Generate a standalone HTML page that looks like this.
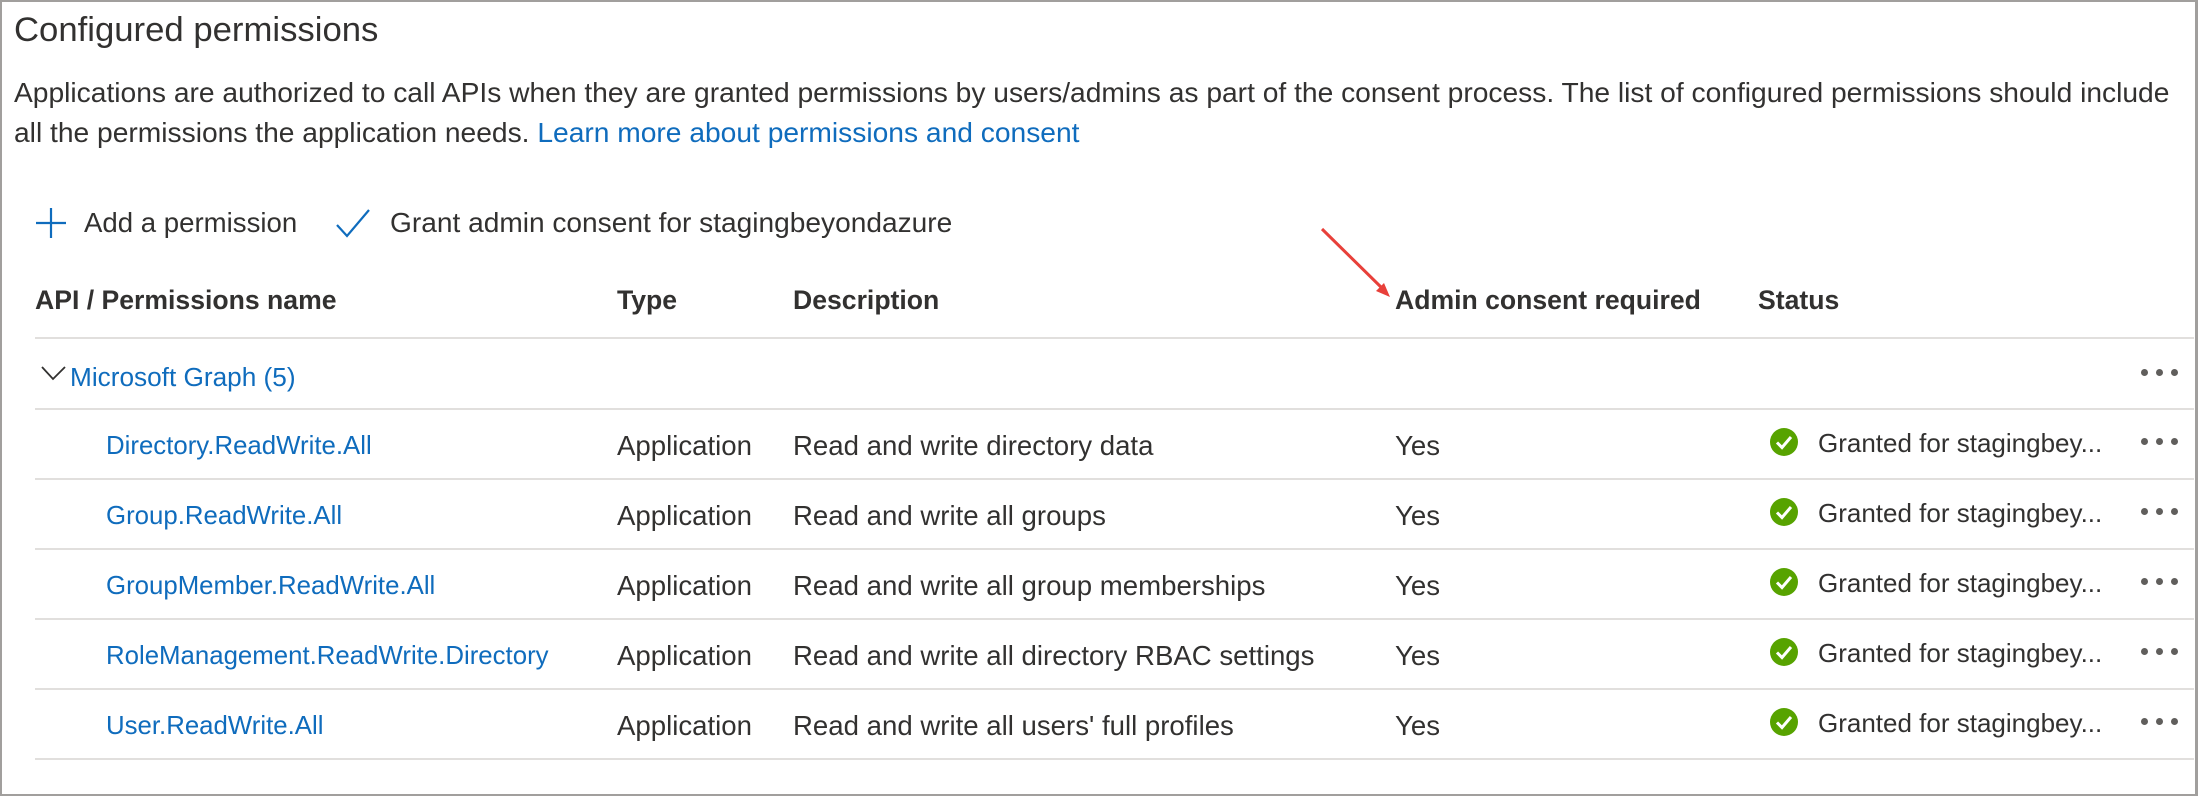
<!DOCTYPE html>
<html><head><style>
body{margin:0;width:2198px;height:796px;overflow:hidden;background:#fff;font-family:"Liberation Sans",sans-serif;color:#323130;position:relative}
.frame{position:absolute;left:0;top:0;border:2px solid #a19f9d;border-right-width:3px;box-sizing:border-box;width:2198px;height:796px}
.a{position:absolute;white-space:nowrap}
.t{font-size:27.6px;line-height:30px}
.b{font-weight:bold;font-size:26.6px}
.l{color:#0f6cbd}
.hr{position:absolute;left:35px;right:4px;height:2px;background:#e1dfdd}
.dots{position:absolute;left:2141px;width:44px;height:8px}
.dots i{position:absolute;top:0;width:7px;height:7px;border-radius:50%;background:#605e5c}
</style></head><body>
<div class="frame"></div>
<div class="a" style="left:14px;top:10px;font-size:34.7px;line-height:40px">Configured permissions</div>
<div class="a t" style="left:14px;top:77px;font-size:28.2px">Applications are authorized to call APIs when they are granted permissions by users/admins as part of the consent process. The list of configured permissions should include</div>
<div class="a t" style="left:14px;top:117px;font-size:28.2px">all the permissions the application needs. <span class="l">Learn more about permissions and consent</span></div>

<svg class="a" style="left:34px;top:206px" width="34" height="34" viewBox="0 0 34 34"><path d="M17 2V32M2 17H32" stroke="#0f6cbd" stroke-width="2.2" fill="none"/></svg>
<div class="a t" style="left:84px;top:208px">Add a permission</div>
<svg class="a" style="left:335px;top:208px" width="36" height="30" viewBox="0 0 36 30"><path d="M2 17L12 28L34 2" stroke="#0f6cbd" stroke-width="2.2" fill="none"/></svg>
<div class="a t" style="left:390px;top:208px;font-size:28.1px">Grant admin consent for stagingbeyondazure</div>

<svg class="a" style="left:1310px;top:220px" width="90" height="85"><path d="M12 9L76 72" stroke="#e8403a" stroke-width="3"/><path d="M80 77L66 71L74 63Z" fill="#e8403a"/></svg>

<div class="a t b" style="left:35px;top:285px">API / Permissions name</div>
<div class="a t b" style="left:617px;top:285px">Type</div>
<div class="a t b" style="left:793px;top:285px">Description</div>
<div class="a t b" style="left:1395px;top:285px">Admin consent required</div>
<div class="a t b" style="left:1758px;top:285px">Status</div>
<div class="hr" style="top:337px"></div>

<svg class="a" style="left:40px;top:364px" width="28" height="18"><path d="M2 3L13 15L25 3" stroke="#323130" stroke-width="1.8" fill="none"/></svg>
<div class="a t l" style="left:70px;top:362px;font-size:26.2px">Microsoft Graph (5)</div>
<div class="dots" style="top:369px"><i style="left:0"></i><i style="left:15px"></i><i style="left:30px"></i></div>
<div class="hr" style="top:408px"></div>

<div id="rows"></div>
<script>
var d=[["Directory.ReadWrite.All","Read and write directory data"],["Group.ReadWrite.All","Read and write all groups"],["GroupMember.ReadWrite.All","Read and write all group memberships"],["RoleManagement.ReadWrite.Directory","Read and write all directory RBAC settings"],["User.ReadWrite.All","Read and write all users' full profiles"]];
var h="";
d.forEach(function(r,i){var c=446+i*70;var t=c-15;
h+='<div class="a t l" style="left:106px;top:'+t+'px;font-size:25.8px">'+r[0]+'</div>';
h+='<div class="a t" style="left:617px;top:'+t+'px">Application</div>';
h+='<div class="a t" style="left:793px;top:'+t+'px">'+r[1]+'</div>';
h+='<div class="a t" style="left:1395px;top:'+t+'px">Yes</div>';
h+='<svg class="a" style="left:1769px;top:'+(c-19)+'px" width="30" height="30"><circle cx="15" cy="15" r="14" fill="#57a300"/><path d="M8 15.5L13 20.5L22 10" stroke="#fff" stroke-width="3" fill="none"/></svg>';
h+='<div class="a t" style="left:1818px;top:'+(t-3)+'px;font-size:26px">Granted for stagingbey...</div>';
h+='<div class="dots" style="top:'+(c-8)+'px"><i style="left:0"></i><i style="left:15px"></i><i style="left:30px"></i></div>';
h+='<div class="hr" style="top:'+(c+32)+'px"></div>';});
document.getElementById("rows").innerHTML=h;
</script>
</body></html>
